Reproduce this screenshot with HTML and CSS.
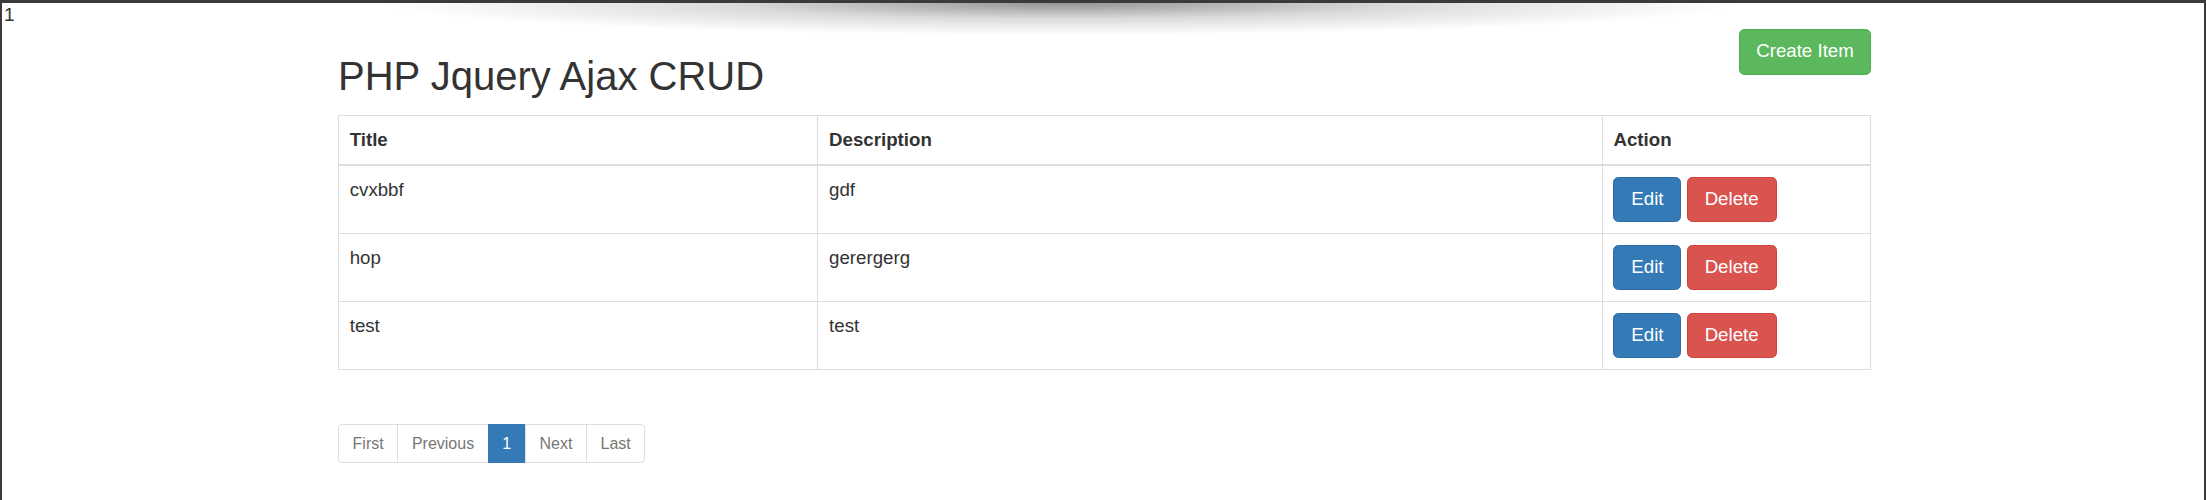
FILE: index.html
```html
<!DOCTYPE html>
<html lang="en">

<head>
  <meta charset="UTF-8">
  <meta name="viewport" content="width=device-width, initial-scale=1.0">
  <title>PHP Jquery Ajax CRUD</title>
  <link rel="stylesheet" href="styles.css">
</head>

<body>

  <div class="frame">
    <div class="shade"></div>
    <div class="counter">1</div>

    <div class="container">
      <div class="page-head">
        <h2>PHP Jquery Ajax CRUD</h2>
        <button class="btn btn-success">Create Item</button>
      </div>

      <table class="table">
        <thead>
          <tr>
            <th class="col-title">Title</th>
            <th class="col-desc">Description</th>
            <th class="col-action">Action</th>
          </tr>
        </thead>
        <tbody>
          <tr>
            <td>cvxbbf</td>
            <td>gdf</td>
            <td>
              <button class="btn btn-primary">Edit</button>
              <button class="btn btn-danger">Delete</button>
            </td>
          </tr>
          <tr>
            <td>hop</td>
            <td>gerergerg</td>
            <td>
              <button class="btn btn-primary">Edit</button>
              <button class="btn btn-danger">Delete</button>
            </td>
          </tr>
          <tr>
            <td>test</td>
            <td>test</td>
            <td>
              <button class="btn btn-primary">Edit</button>
              <button class="btn btn-danger">Delete</button>
            </td>
          </tr>
        </tbody>
      </table>

      <ul class="pagination">
        <li><a href="#">First</a></li>
        <li><a href="#">Previous</a></li>
        <li class="active"><a href="#">1</a></li>
        <li><a href="#">Next</a></li>
        <li><a href="#">Last</a></li>
      </ul>
    </div>
  </div>

</body>

</html>
```

FILE: styles.css
```css
html,
body {
  margin: 0;
  height: 100%;
}

body {
  font-family: "Liberation Sans", Arial, sans-serif;
  font-size: 18.7px;
  line-height: 26.8px;
  color: #333;
  background-color: #fff;
}

.frame {
  position: relative;
  box-sizing: border-box;
  height: 100%;
  border-top: 3px solid #3a3a3a;
  border-left: 2px solid #3a3a3a;
  border-right: 2px solid #3a3a3a;
  overflow: hidden;
}

/* soft shadow under the top edge */
.shade {
  position: absolute;
  top: 0;
  left: 0;
  right: 0;
  height: 40px;
  background: radial-gradient(ellipse 680px 32px at 1060px 0, rgba(0, 0, 0, 0.42), rgba(0, 0, 0, 0.14) 50%, rgba(0, 0, 0, 0) 100%);
  pointer-events: none;
}

.counter {
  padding: 1px 0 0 2px;
  font-size: 19px;
  line-height: 22px;
  color: #333;
  height: 22px;
}

.container {
  width: 1533px;
  margin: 0 0 0 336px;
}

.page-head {
  display: flex;
  justify-content: space-between;
  align-items: flex-start;
  padding-top: 3px;
}

h2 {
  margin: 25px 0 17px;
  font-size: 40px;
  line-height: 44px;
  font-weight: 500;
  color: #333;
}

.btn {
  display: inline-block;
  box-sizing: border-box;
  height: 45.6px;
  padding: 8px 16px;
  font-family: inherit;
  font-size: 18.7px;
  line-height: 26.8px;
  color: #fff;
  border: 1px solid transparent;
  border-radius: 5.4px;
  cursor: pointer;
  vertical-align: middle;
}

.btn-success {
  width: 132px;
  background-color: #5cb85c;
  border-color: #4cae4c;
}

.btn-primary {
  width: 68px;
  background-color: #337ab7;
  border-color: #2e6da4;
}

.btn-danger {
  width: 90px;
  background-color: #d9534f;
  border-color: #d43f3a;
}

.table {
  width: 100%;
  border-collapse: collapse;
  border: 1px solid #ddd;
}

.table th,
.table td {
  padding: 10.7px;
  text-align: left;
  vertical-align: top;
  border: 1px solid #ddd;
}

.table th {
  font-weight: bold;
  border-bottom: 2px solid #ddd;
}

.col-title {
  width: 457px;
}

.col-desc {
  width: 762px;
}

.pagination {
  display: flex;
  margin: 54px 0 0;
  padding: 0;
  list-style: none;
}

.pagination li a {
  display: block;
  padding: 6.7px 13.6px;
  margin-left: -1px;
  font-size: 16px;
  line-height: 24px;
  color: #777;
  text-decoration: none;
  border: 1px solid #ddd;
  background-color: #fff;
}

.pagination li:first-child a {
  margin-left: 0;
  border-radius: 4px 0 0 4px;
}

.pagination li:last-child a {
  border-radius: 0 4px 4px 0;
}

.pagination li.active a {
  color: #fff;
  background-color: #337ab7;
  border-color: #337ab7;
}
```
